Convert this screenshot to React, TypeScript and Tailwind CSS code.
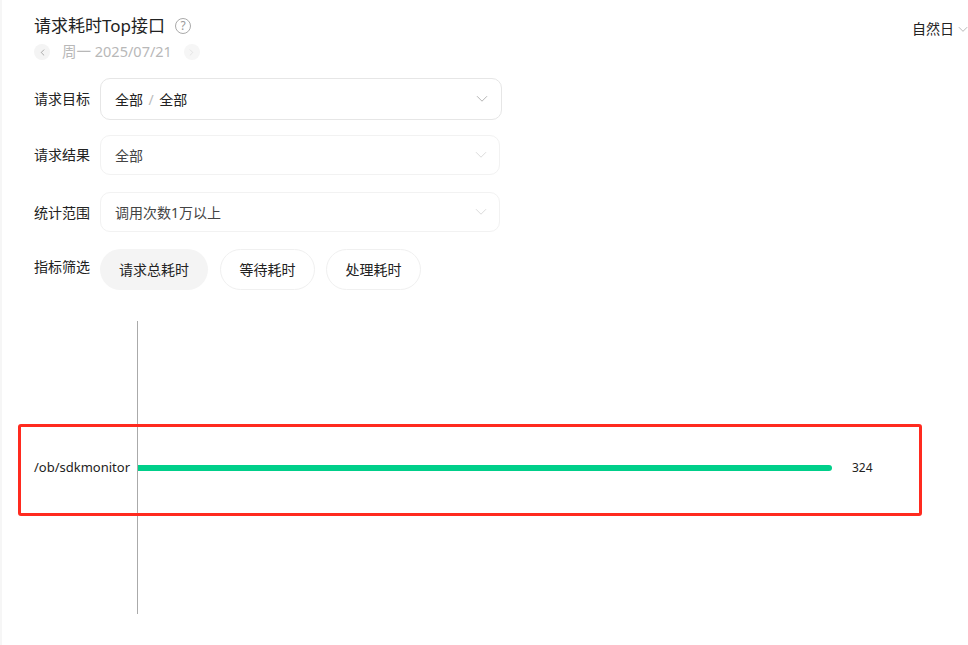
import React from 'react';

function Chevron({ className }: { className: string }) {
  return (
    <svg viewBox="0 0 12 8" fill="none" stroke="currentColor" strokeWidth="1" className={className}>
      <path d="M1 1.2 L6 6.2 L11 1.2" />
    </svg>
  );
}

function FormRow({ label, rowClass, labelClass, children }: { label: string; rowClass: string; labelClass?: string; children: React.ReactNode }) {
  return (
    <div className={`flex ${rowClass}`}>
      <span className={`w-[66px] shrink-0 text-[14px] leading-[20px] text-[#222] ${labelClass ?? ''}`}>{label}</span>
      {children}
    </div>
  );
}

function Select({ className, arrow, children }: { className: string; arrow: string; children: React.ReactNode }) {
  return (
    <div className={`flex items-center justify-between rounded-[10px] border bg-white pl-[14px] text-[14px] ${className}`}>
      <div className="flex items-center">{children}</div>
      <Chevron className={`h-[8px] w-[12px] ${arrow}`} />
    </div>
  );
}

function Pill({ label, active, className }: { label: string; active?: boolean; className?: string }) {
  return (
    <div
      className={
        active
          ? `flex h-[41px] w-[108px] items-center justify-center rounded-full bg-[#f4f4f4] text-[14px] text-[#222] ${className ?? ''}`
          : `flex h-[41px] w-[95px] items-center justify-center rounded-full border border-[#f0f0f0] bg-white text-[14px] text-[#222] ${className ?? ''}`
      }
    >
      {label}
    </div>
  );
}

export default function App() {
  return (
    <div className="relative flex h-[645px] w-[968px] overflow-hidden bg-white font-['Noto_Sans','Noto_Sans_CJK_SC',sans-serif]">
      <div className="w-[2px] shrink-0 bg-[#f6f6f6]" />

      <div className="flex-1 pl-[32px]">
        {/* header */}
        <div className="flex justify-between pt-[14px]">
          <div>
            <div className="flex items-center">
              <span className="text-[17px] leading-[24px] text-[#222]">请求耗时Top接口</span>
              <span className="ml-[10px] flex h-[16px] w-[16px] items-center justify-center rounded-full border border-[#aaa] text-[12px] leading-none text-[#999]">?</span>
            </div>
            <div className="mt-[4px] flex h-[20px] items-center">
              <span className="flex h-[16px] w-[16px] items-center justify-center rounded-full bg-[#f4f4f4]">
                <Chevron className="h-[9px] w-[7px] rotate-90 text-[#777]" />
              </span>
              <span className="ml-[12px] text-[14.5px] text-[#b8b8b8]">周一 2025/07/21</span>
              <span className="ml-[12px] flex h-[16px] w-[16px] items-center justify-center rounded-full bg-[#f6f6f6]">
                <Chevron className="h-[9px] w-[7px] -rotate-90 text-[#d8d8d8]" />
              </span>
            </div>
          </div>
          <div className="flex items-center self-start pt-[5px]">
            <span className="text-[14px] leading-[20px] text-[#222]">自然日</span>
            <Chevron className="ml-[4px] h-[7px] w-[10px] text-[#aaa]" />
          </div>
        </div>

        {/* filters */}
        <FormRow label="请求目标" rowClass="mt-[16px] items-center">
          <Select className="h-[42px] w-[402px] border-[#e6e6e6] pr-[13px]" arrow="text-[#b5b5b5]">
            <span className="text-[#222]">全部</span>
            <span className="mx-[5.5px] text-[#bbb]">/</span>
            <span className="text-[#222]">全部</span>
          </Select>
        </FormRow>

        <FormRow label="请求结果" rowClass="mt-[15px] items-center">
          <Select className="h-[40px] w-[400px] border-[#f2f2f2] pr-[12px]" arrow="text-[#dcdcdc]">
            <span className="text-[#444]">全部</span>
          </Select>
        </FormRow>

        <FormRow label="统计范围" rowClass="mt-[17px] items-center" labelClass="mt-[2px]">
          <Select className="h-[40px] w-[400px] border-[#f2f2f2] pr-[12px]" arrow="text-[#dcdcdc]">
            <span className="text-[#444]">调用次数1万以上</span>
          </Select>
        </FormRow>

        <FormRow label="指标筛选" rowClass="mt-[17px] items-start" labelClass="mt-[8px]">
          <div className="flex">
            <Pill label="请求总耗时" active className="mr-[12px]" />
            <Pill label="等待耗时" className="mr-[11px]" />
            <Pill label="处理耗时" />
          </div>
        </FormRow>

        {/* chart */}
        <div className="mt-[31px] flex h-[293px] items-center">
          <span className="w-[103px] shrink-0 text-[13px] text-[#222]">/ob/sdkmonitor</span>
          <div className="flex h-full items-center border-l border-[#aaa]">
            <div className="h-[6px] w-[694px] rounded-r-full bg-[#00cf8a]" />
            <span className="ml-[20px] text-[12px] text-[#222]">324</span>
          </div>
        </div>
      </div>

      {/* annotation drawn on top of the chart */}
      <div className="absolute left-[18px] top-[424px] h-[92px] w-[904px] rounded-[3px] border-[3px] border-[#ff2a1f]" />
    </div>
  );
}
